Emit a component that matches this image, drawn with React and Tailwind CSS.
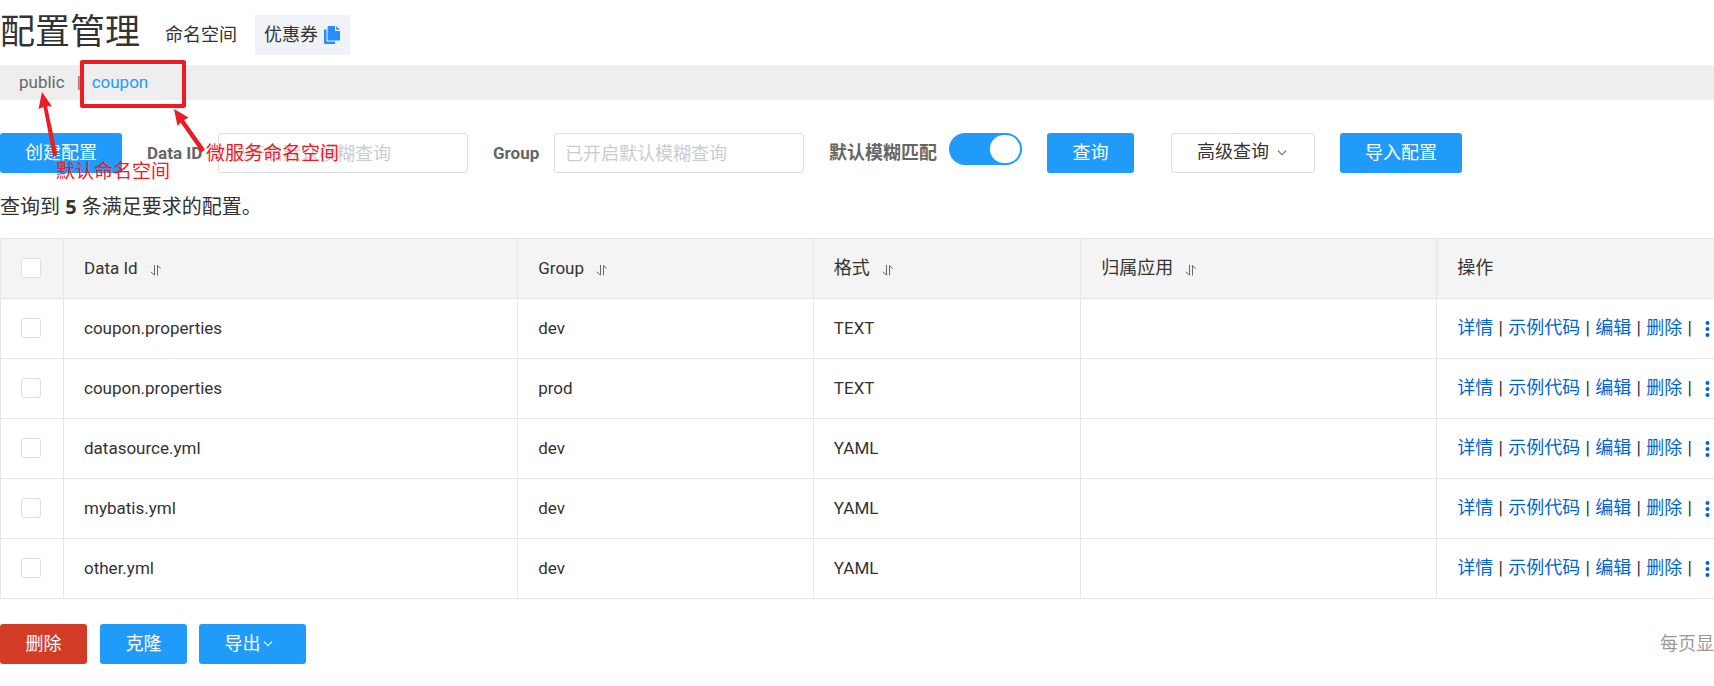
import { useState } from "react";

const rows = [
  ["coupon.properties", "dev", "TEXT"],
  ["coupon.properties", "prod", "TEXT"],
  ["datasource.yml", "dev", "YAML"],
  ["mybatis.yml", "dev", "YAML"],
  ["other.yml", "dev", "YAML"],
];

const columns = [
  { name: "Data Id", latin: true },
  { name: "Group", latin: true },
  { name: "格式" },
  { name: "归属应用" },
];

const btn = "h-10 shrink-0 rounded-[3px] bg-[#209bfa] text-white";
const field =
  "h-10 w-[250px] shrink-0 rounded-[3px] border border-[#dcdee3] bg-white px-2.5 placeholder:text-[#cccccc] outline-none";
const label = "shrink-0 font-bold text-[#666666]";
const cell = "border-b border-l border-[#e6e6e6] px-5 pb-0.5 text-left font-normal";
const box =
  "block size-5 appearance-none rounded-[3px] border border-[#dcdee3] bg-white checked:bg-[#209bfa]";

function SortIcon() {
  return (
    <svg className="mt-1 h-3 w-[11px]" viewBox="0 0 11 12" fill="none" stroke="#666" strokeWidth="1" aria-hidden="true">
      <path d="M4.500 1V11L0.800 8M7.500 11.500V1.500L10.700 4.500" />
    </svg>
  );
}

function Chevron({ className }) {
  return (
    <svg className={className} viewBox="0 0 10 6" fill="none" stroke="currentColor" strokeWidth="1.1" aria-hidden="true">
      <path d="M1 0.7L5 4.8L9 0.7" />
    </svg>
  );
}

function CopyIcon() {
  return (
    <svg className="h-[18px] w-4" viewBox="0 0 16 18" fill="#2a8bff" aria-hidden="true">
      <path d="M0 3.5h2.6V15.4H11V18H1.2A1.2 1.2 0 0 1 0 16.8Z" />
      <path d="M4.8 0H11V5h5v8.3a1.2 1.2 0 0 1-1.2 1.2H4.8A1.2 1.2 0 0 1 3.6 13.3V1.2A1.2 1.2 0 0 1 4.8 0Z" />
      <path d="M12.2 0L16 3.8H12.2Z" />
    </svg>
  );
}

function Annotations() {
  return (
    <div className="pointer-events-none absolute inset-0 text-[19px] leading-6 text-[#ed1c24]">
      <svg className="absolute left-0 top-0 h-[200px] w-[240px]" viewBox="0 0 240 200" aria-hidden="true">
        <rect x="82" y="62" width="102" height="44" fill="none" stroke="#ed1c24" strokeWidth="4" strokeLinejoin="round" />
        <g fill="#ed1c24">
          <path d="M42 92L52 106.500L47 106L57.500 155L53 157L43.500 107L38.500 109Z" />
          <path d="M174 109L188.500 117.500L184 120L205 149.500L201.500 152.500L180.500 122.500L177.500 126Z" />
        </g>
      </svg>
      <span className="absolute left-14 top-[160px] whitespace-nowrap">默认命名空间</span>
      <span className="absolute left-[206px] top-[142px] whitespace-nowrap">微服务命名空间</span>
    </div>
  );
}

export default function App() {
  const [fuzzy, setFuzzy] = useState(true);
  return (
    <div className="relative overflow-hidden bg-[#fcfcfc] pb-2 font-[Roboto,'Noto_Sans_CJK_SC',sans-serif] text-[18px] leading-6 text-[#333333]">
      <main className="bg-white pb-[15px]">
        <header className="flex h-[65px] items-center">
          <h1 className="text-[35px] leading-[50px]">配置管理</h1>
          <span className="ml-[25px] mt-1">命名空间</span>
          <button className="ml-[18px] mt-1 flex h-10 items-center gap-1.5 bg-[#eff3f8] pl-[9px] pr-2.5">
            优惠券
            <CopyIcon />
          </button>
        </header>

        <nav className="flex h-[35px] items-center bg-[#eeeeee] pb-0.5 pl-[19px] text-[17px] text-[#666666]">
          <a href="#public">public</a>
          <span className="mx-3 w-[3px]">|</span>
          <a href="#coupon" className="text-[#209bfa]">coupon</a>
        </nav>

        <form className="mt-[33px] flex items-center" onSubmit={(e) => e.preventDefault()}>
          <button type="button" className={`${btn} w-[122px]`}>创建配置</button>
          <label htmlFor="dataId" className={`${label} ml-[25px] w-[71px] text-[17px]`}>Data ID</label>
          <input id="dataId" className={field} placeholder="已开启默认模糊查询" />
          <label htmlFor="group" className={`${label} ml-[25px] w-[61px] text-[17px]`}>Group</label>
          <input id="group" className={field} placeholder="已开启默认模糊查询" />
          <label htmlFor="fuzzy" className={`${label} ml-[25px] w-[120px]`}>默认模糊匹配</label>
          <span className="relative mb-2 h-8 w-[73px] shrink-0">
            <input
              id="fuzzy"
              type="checkbox"
              role="switch"
              checked={fuzzy}
              onChange={() => setFuzzy(!fuzzy)}
              className="peer block h-8 w-[73px] appearance-none rounded-full bg-[#cccccc] checked:bg-[#209bfa]"
            />
            <span className="pointer-events-none absolute left-0.5 top-0.5 h-7 w-[30px] rounded-full bg-white peer-checked:left-[41px]" />
          </span>
          <button className={`${btn} ml-[25px] w-[87px]`}>查询</button>
          <button type="button" className="ml-[37px] flex h-10 w-[144px] shrink-0 items-center justify-center gap-2 rounded-[3px] border border-[#dcdee3] pb-0.5 pr-0.5">
            高级查询
            <Chevron className="mt-0.5 h-1.5 w-2.5 text-[#666666]" />
          </button>
          <button type="button" className={`${btn} ml-[25px] w-[122px]`}>导入配置</button>
        </form>

        <p className="mt-[21px] font-['Open_Sans','Noto_Sans_CJK_SC',sans-serif] text-[20px] leading-[26px]">
          查询到 <strong>5</strong> 条满足要求的配置。
        </p>

        <table className="mt-[18px] w-full table-fixed border-separate border-spacing-0 border-t border-[#e6e6e6]">
          <colgroup>
            <col className="w-[63px]" />
            <col className="w-[26.5%]" />
            <col className="w-[17.25%]" />
            <col className="w-[15.6%]" />
            <col className="w-[20.77%]" />
            <col />
          </colgroup>
          <thead className="bg-[#f4f4f4]">
            <tr className="h-[60px]">
              <th className={cell}><input type="checkbox" className={box} aria-label="全选" /></th>
              {columns.map(({ name, latin }) => (
                <th key={name} className={cell}>
                  <span className={`flex items-center gap-3 ${latin ? "text-[17px]" : ""}`}>{name}<SortIcon /></span>
                </th>
              ))}
              <th className={cell}>操作</th>
            </tr>
          </thead>
          <tbody className="text-[17px]">
            {rows.map(([id, group, format], i) => (
              <tr key={i} className="h-[60px]">
                <td className={cell}><input type="checkbox" className={box} aria-label={id} /></td>
                <td className={cell}>{id}</td>
                <td className={cell}>{group}</td>
                <td className={cell}>{format}</td>
                <td className={cell} />
                <td className={`${cell} whitespace-nowrap pr-0 text-[18px]`}>
                  <span className="flex items-center">
                    {["详情", "示例代码", "编辑", "删除"].map((name) => (
                      <span key={name} className="flex shrink-0">
                        <a href="#row" className="text-[#0066cc]">{name}</a>
                        <span className="w-[15px] text-center">|</span>
                      </span>
                    ))}
                    <button className="ml-2 mt-0.5 shrink-0 text-[#0066cc]" aria-label="更多">
                      <svg className="h-4 w-[5px]" viewBox="0 0 5 16" fill="currentColor">
                        <circle cx="2.5" cy="2" r="2" />
                        <circle cx="2.5" cy="8" r="2" />
                        <circle cx="2.5" cy="14" r="2" />
                      </svg>
                    </button>
                  </span>
                </td>
              </tr>
            ))}
          </tbody>
        </table>

        <footer className="mt-[25px] flex items-center">
          <button className="h-10 w-[87px] rounded-[3px] bg-[#d23c26] text-white">删除</button>
          <button className={`${btn} ml-[13px] w-[87px]`}>克隆</button>
          <button className={`${btn} ml-3 flex w-[107px] items-center justify-center gap-0.5 pr-2`}>
            导出
            <Chevron className="h-1.5 w-2.5" />
          </button>
          <span className="ml-auto text-[#999999]">每页显</span>
        </footer>
      </main>
      <Annotations />
    </div>
  );
}
